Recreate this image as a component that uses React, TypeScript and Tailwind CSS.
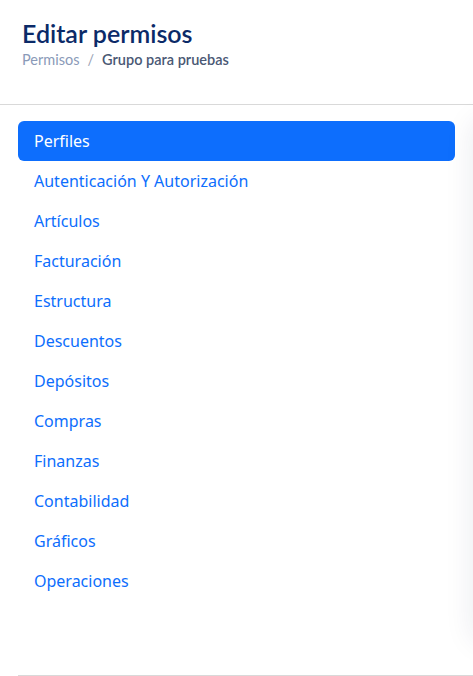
const items = [
  'Perfiles',
  'Autenticación Y Autorización',
  'Artículos',
  'Facturación',
  'Estructura',
  'Descuentos',
  'Depósitos',
  'Compras',
  'Finanzas',
  'Contabilidad',
  'Gráficos',
  'Operaciones',
];

const App = () => {
  return (
    <div className="min-h-screen w-full overflow-hidden bg-white">
      {/* Header */}
      <div className="px-[22px] pt-[18px] pb-[34px] border-b border-[#d9d9d9]">
        <h1 className="text-[25px] leading-[30px] font-semibold text-[#0b2a68] font-['Lato',sans-serif]">
          Editar permisos
        </h1>
        <div className="mt-[2px] flex items-center gap-[8px] text-[14.5px] leading-[20px] font-['Lato',sans-serif]">
          <span className="text-[#8a9ab8]">Permisos</span>
          <span className="text-[#9aa3b5]">/</span>
          <span className="font-semibold text-[#4a5874]">Grupo para pruebas</span>
        </div>
      </div>

      {/* Body */}
      <div className="flex gap-[18px] pl-[18px] pt-[16px]">
        <nav className="w-[437px] shrink-0 flex flex-col font-['Noto_Sans',sans-serif]">
          {items.map((item, index) => (
            <a
              key={item}
              className={
                index === 0
                  ? 'h-[40px] flex items-center px-[16px] rounded-[6px] bg-[#0d6efd] text-white text-[16px]'
                  : 'h-[40px] flex items-center px-[16px] text-[#0d6efd] text-[16px]'
              }
            >
              {item}
            </a>
          ))}
        </nav>
        <div className="w-[400px] h-[520px] shrink-0 rounded-[6px] bg-white shadow-[0_0_30px_rgba(20,30,80,0.09)]" />
      </div>

      <div className="ml-[18px] mt-[34px] border-t border-[#d9d9d9]" />
    </div>
  );
};

export default App;
